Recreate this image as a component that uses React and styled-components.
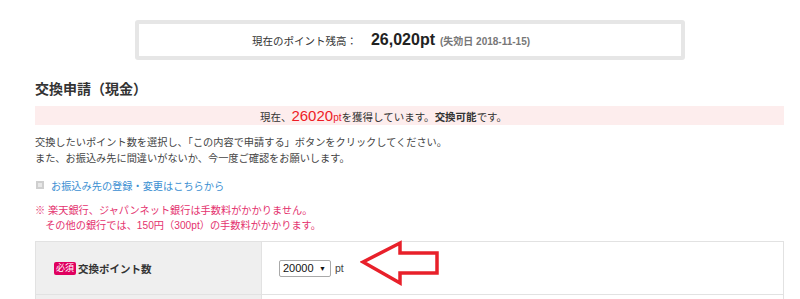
import React from "react";
import styled, { createGlobalStyle } from "styled-components";

const GlobalStyle = createGlobalStyle`
  html, body {
    margin: 0;
    padding: 0;
    background: #fff;
  }
  body {
    font-family: "Liberation Sans", "Noto Sans CJK JP", sans-serif;
    color: #333;
    font-size: 11px;
  }
`;

const Page = styled.div`
  width: 749px;
  padding: 20px 0 0 35px;
  position: relative;
`;

const BalanceBox = styled.div`
  width: 542px;
  height: 32px;
  margin: 0 auto 0 100px;
  padding-right: 38px;
  box-sizing: content-box;
  width: 504px;
  border: 4px solid #e6e6e6;
  border-radius: 3px;
  display: flex;
  align-items: center;
  justify-content: center;
  font-size: 10.5px;
  color: #333;
`;

const BigPoint = styled.span`
  font-size: 16px;
  font-weight: bold;
  color: #222;
  margin: 0 5px 0 14px;
`;

const Expire = styled.span`
  font-size: 10px;
  font-weight: bold;
  color: #777;
`;

const Heading = styled.h2`
  margin: 19px 0 0;
  font-size: 14px;
  font-weight: bold;
  color: #333;
  line-height: 20px;
`;

const StatusBar = styled.div`
  margin-top: 7px;
  height: 19px;
  background: #fdeded;
  display: flex;
  align-items: baseline;
  justify-content: center;
  padding-right: 52px;
  font-size: 10.5px;
  line-height: 19px;
  color: #333;
`;

const RedNum = styled.span`
  color: ${p => (p.$small ? "#e8202a" : "#ee1c25")};
  font-size: ${p => (p.$small ? "10px" : "15px")};
`;

const Strong = styled.span`
  font-weight: bold;
`;

const Paragraph = styled.p`
  margin: 10px 0 0;
  font-size: 10.2px;
  line-height: 16px;
  color: #444;
`;

const LinkRow = styled.div`
  margin-top: 10px;
  display: flex;
  align-items: center;
  gap: 7px;
  height: 16px;
  padding-left: 1px;
`;

const Bullet = styled.span`
  width: 8px;
  height: 8px;
  box-sizing: border-box;
  background: #e8e8e8;
  border: 2px solid #cfcfcf;
`;

const TextLink = styled.a`
  color: #3b8fd2;
  font-size: 10.2px;
  text-decoration: none;
`;

const Notes = styled.p`
  margin: 10px 0 0;
  font-size: 10.2px;
  line-height: 15px;
  color: #e4326e;
  white-space: pre;
`;

const Table = styled.div`
  margin-top: 8px;
  border: 1px solid #e2e2e2;
  border-bottom: none;
`;

const Row = styled.div`
  display: grid;
  grid-template-columns: 226px 1fr;
  height: 52px;
  border-bottom: 1px solid #e2e2e2;
`;

const HeadCell = styled.div`
  background: #efefef;
  border-right: 1px solid #e2e2e2;
  display: flex;
  align-items: center;
  padding-left: 18px;
  gap: 2px;
  font-size: 10.5px;
  font-weight: bold;
  color: #333;
`;

const Badge = styled.span`
  background: #e0005f;
  color: #fff;
  font-size: 9px;
  font-weight: normal;
  padding: 1px 2px;
  border-radius: 2px;
  line-height: 11px;
`;

const ValueCell = styled.div`
  display: flex;
  align-items: center;
  padding-left: 17px;
  gap: 4px;
  font-size: 10.5px;
  color: #444;
`;

const Select = styled.div`
  width: 52px;
  height: 17px;
  box-sizing: border-box;
  border: 1px solid #a9a9a9;
  border-radius: 2px;
  display: flex;
  align-items: center;
  justify-content: space-between;
  padding: 0 4px 0 3px;
  font-size: 11px;
  color: #111;
  background: #fff;
`;

const Caret = styled.span`
  font-size: 7px;
`;

const Arrow = styled.svg`
  position: absolute;
  left: 360px;
  top: 240px;
`;

export default function App() {
  return (
    <>
      <GlobalStyle />
      <Page>
        <BalanceBox>
          <span>現在のポイント残高：</span>
          <BigPoint>26,020pt</BigPoint>
          <Expire>(失効日 2018-11-15)</Expire>
        </BalanceBox>
        <Heading>交換申請（現金）</Heading>
        <StatusBar>
          現在、<RedNum>26020</RedNum>
          <RedNum $small>pt</RedNum>を獲得しています。<Strong>交換可能</Strong>です。
        </StatusBar>
        <Paragraph>
          交換したいポイント数を選択し、「この内容で申請する」ボタンをクリックしてください。
          <br />
          また、お振込み先に間違いがないか、今一度ご確認をお願いします。
        </Paragraph>
        <LinkRow>
          <Bullet />
          <TextLink href="#">お振込み先の登録・変更はこちらから</TextLink>
        </LinkRow>
        <Notes>
          {"※ 楽天銀行、ジャパンネット銀行は手数料がかかりません。\n　その他の銀行では、150円（300pt）の手数料がかかります。"}
        </Notes>
        <Table>
          <Row>
            <HeadCell>
              <Badge>必須</Badge>交換ポイント数
            </HeadCell>
            <ValueCell>
              <Select>
                <span>20000</span>
                <Caret>▼</Caret>
              </Select>
              pt
            </ValueCell>
          </Row>
          <Row>
            <HeadCell />
            <ValueCell />
          </Row>
        </Table>
        <Arrow width="80" height="46" viewBox="0 0 80 46">
          <polygon
            points="3,22 40,3 40,13 77,13 77,33 40,33 40,43"
            fill="none"
            stroke="#e8202a"
            strokeWidth="3.5"
            strokeLinejoin="miter"
          />
        </Arrow>
      </Page>
    </>
  );
}
